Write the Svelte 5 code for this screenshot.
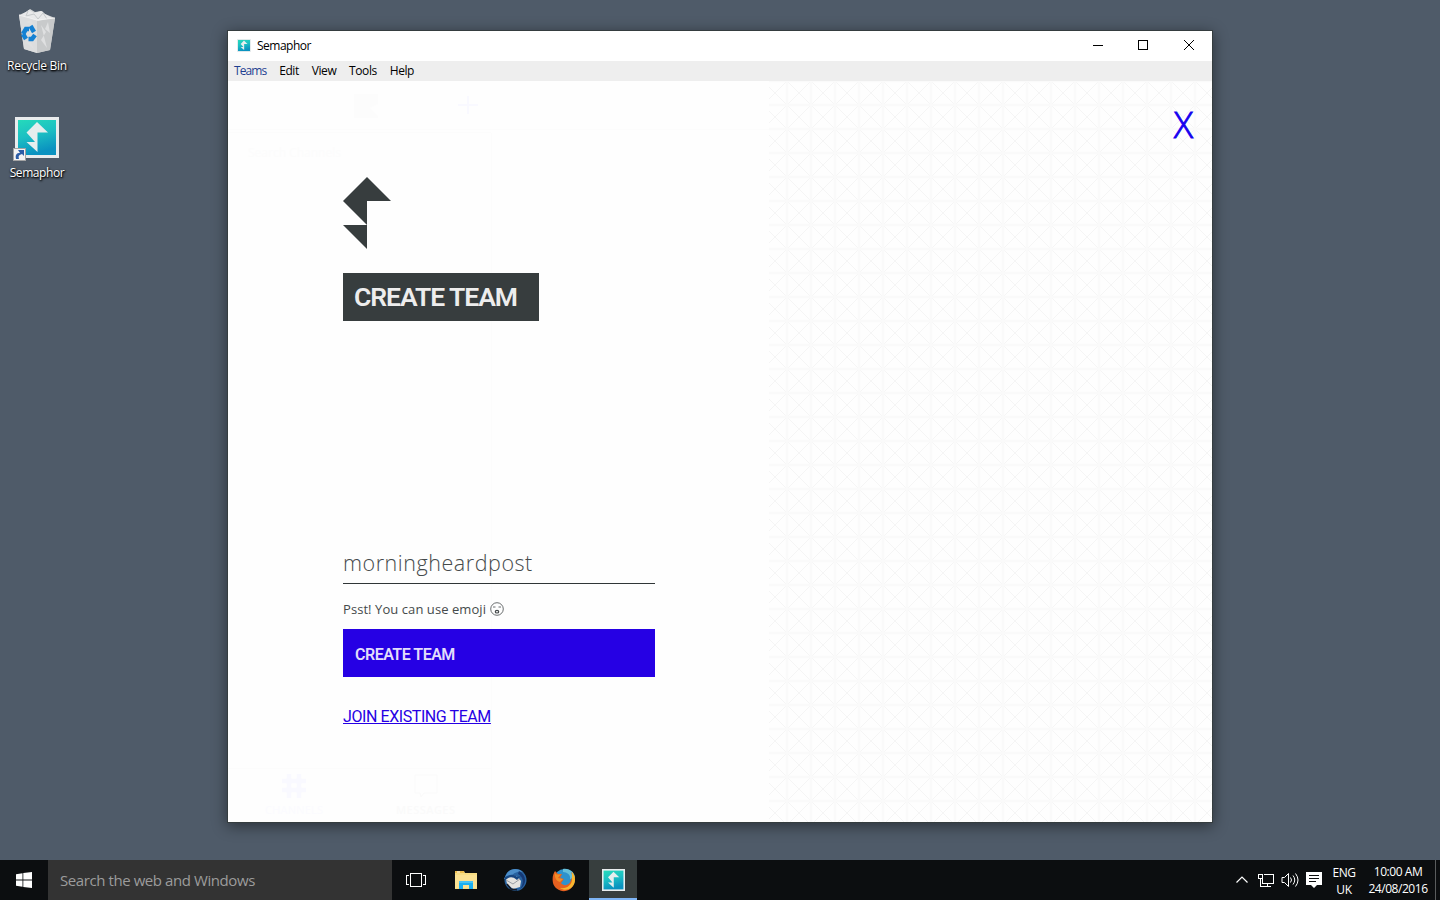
<script>
  const menus = ['Teams', 'Edit', 'View', 'Tools', 'Help'];
  let team = $state('morningheardpost');
</script>

{#snippet tile()}
  <defs>
    <linearGradient id="teal" x1="0" y1="0" x2=".3" y2="1">
      <stop offset="0" stop-color="#25dabb" />
      <stop offset=".5" stop-color="#1cbfc3" />
      <stop offset="1" stop-color="#0a92c0" />
    </linearGradient>
  </defs>
  <rect width="44" height="41" fill="#e9eced" />
  <rect x="3" y="3" width="38" height="35" fill="url(#teal)" />
  <path d="M22 5 L33 15.5 H22.5 V35 L11.5 25 H20 L11.5 15.5 Z" fill="#e6eeee" />
{/snippet}

<div class="screen">
  <main class="desktop">
    <div class="shortcuts">
      <div class="shortcut">
        <svg width="40" height="46" viewBox="0 0 40 46">
          <path d="M2 6 L9 3 L13 0 L18 3 L25 2 L28 5 L38 9 L33 41 L20 44 L7 40 Z" fill="#d5d7d8" />
          <path d="M2 6 L20 11 V44 L7 40 Z" fill="#dcddde" />
          <path d="M20 11 L38 9 L33 41 L20 44 Z" fill="#c8cacb" />
          <path d="M4 6 L12 1 L17 4 L24 2 L28 5 L35 9 L21 12 Z" fill="#e8e9ea" />
          <path d="M11 2l-2 5 8-2 4 5 5-6 4 6" stroke="#c6c9cb" fill="none" />
          <path d="M24 16l5 7-5 8 6 8zM31 13l-3 7 5 4zM9 13l5-2 3 5zM8 33l5-1 4 8z" fill="#dfe0e1" />
          <path d="M2 6 L20 11 L38 9" stroke="#f1f1f1" fill="none" />
          <g fill="none" stroke="#1481d3" stroke-width="4.500">
            <path d="M6 25 L9 20 L12 20" /><path d="M13.500 17 L17 23" /><path d="M18 26 L15 30 L11.500 30" /><path d="M9 30 L6 25" />
          </g>
        </svg>
        <span class="bin">Recycle Bin</span>
      </div>
      <div class="shortcut second">
        <svg width="48" height="46" viewBox="0 0 48 46">
          <g transform="translate(3 0)">{@render tile()}</g>
          <rect x="1.500" y="31.500" width="12" height="12" fill="#f3f3f3" stroke="#a4a4a4" />
          <path d="M4 42 C3 37 5 36 8 36 L6 33 H12 V39 L10 37 C7 38 6 39 7 42 Z" fill="#2c5ca5" />
        </svg>
        <span class="sem">Semaphor</span>
      </div>
    </div>

    <section class="window">
      <header class="title">
        <svg width="14" height="13" viewBox="0 0 44 41">{@render tile()}</svg>
        <span>Semaphor</span>
        <svg class="controls" width="104" height="14" viewBox="0 0 104 14" fill="none" stroke="#000" shape-rendering="crispEdges">
          <path d="M1 7.5H11M46.5 2.5h9v9h-9z" /><path d="M92 2l10 10M102 2L92 12" shape-rendering="auto" />
        </svg>
      </header>
      <nav>
        {#each menus as menu, i}<span class:active={i === 0}>{menu}</span>{/each}
      </nav>
      <div class="content">
        <svg class="ghost" width="541" height="741" viewBox="0 0 541 741" fill="none">
          <path d="M0 48.5H541M0 51.5H263M263.5 52V741M0 687.5H263" stroke="#fcfcfc" />
          <path d="M126 13h24v10l-8 4 8 8v2h-24z" fill="#fcfcfc" />
          <path d="M230 24h20M240 15v18" stroke="#f9f9ff" stroke-width="2" />
          <path d="M61 693v24M71 693v24M54 700h24M54 709h24" stroke="#f9f9ff" stroke-width="4.500" />
          <path d="M187 694h22v18h-13l-3 4-1-4h-5z" stroke="#fafafa" />
          <text x="20" y="76" fill="#fcfcfc" font-size="12">Search Channels</text>
          <text x="37" y="733" fill="#fbfbff" font-size="11" textLength="58">CHANNELS</text>
          <text x="168" y="733" fill="#fafafa" font-size="11" font-weight="600" textLength="59">MESSAGES</text>
        </svg>
        <div class="form">
          <svg class="logo" width="48" height="72" viewBox="0 0 48 72">
            <path d="M24 0 L48 24 H24 V48 L0 24 Z M0 48 H24 V72 Z" fill="#373d3e" />
          </svg>
          <h1><span>CREATE TEAM</span></h1>
          <input bind:value={team} spellcheck="false" aria-label="Team name" />
          <p>
            <span>Psst! You can use emoji</span>
            <svg width="14" height="14" viewBox="0 0 14 14" fill="none" stroke="#454a4b" stroke-width=".8">
              <circle cx="7" cy="7" r="6.3" /><path d="M3 5h2.5M8.5 5H11" /><ellipse cx="7" cy="9.7" rx="1.7" ry="1.3" stroke-width="1.2" />
            </svg>
          </p>
          <button><span>CREATE TEAM</span></button>
          <a href="#join">JOIN EXISTING TEAM</a>
        </div>
        <div class="side">
          <svg class="pattern" width="443" height="741">
            <defs>
              <pattern id="cross" width="24" height="24" patternUnits="userSpaceOnUse" x="18" y="0">
                <path d="M0 0L24 24M24 0L0 24" stroke="#f3f3f3" stroke-width=".8" />
                <path d="M0 0H24M0 24H24M0 0V24M24 0V24" stroke="#fafafa" stroke-width="2.400" />
              </pattern>
            </defs>
            <rect width="443" height="741" fill="url(#cross)" />
          </svg>
          <span class="close">X</span>
        </div>
      </div>
    </section>
  </main>

  <footer>
    <div class="start">
      <svg width="16" height="16" viewBox="0 0 16 16" fill="#fff"><path d="M0 2.2L6.5 1.3V7.5H0zM7.3 1.1L16 0V7.5H7.3zM0 8.5H6.5V14.7L0 13.8zM7.3 8.5H16V16L7.3 14.9z" /></svg>
    </div>
    <div class="search"><span>Search the web and Windows</span></div>
    <div class="app task">
      <svg width="20" height="14" viewBox="0 0 20 14" fill="none" stroke="#fff" shape-rendering="crispEdges"><path d="M4.5.5h11v13h-11zM3 2.5H.5v9H3M17 2.5h2.500v9H17" /></svg>
    </div>
    <div class="app explorer">
      <svg width="22" height="19" viewBox="0 0 22 19">
        <path d="M0 0h9l1 2h12v16H0z" fill="#f7dc83" /><path d="M0 0h9v2H0z" fill="#edbd4e" /><path d="M2 1h3" stroke="#fff" />
        <path d="M0 4h22v13H0z" fill="#fbe192" /><path d="M4 10h14v8h-4v-4H8v4H4z" fill="#1baff0" /><path d="M4 10h14v2H4z" fill="#46c4f5" />
      </svg>
    </div>
    <div class="app bird">
      <svg width="24" height="24" viewBox="0 0 24 24">
        <circle cx="12.500" cy="12" r="11" fill="#2862a0" /><path d="M4 5C8 0 15 0 20 4c-7-1-9 1-14 6l-5 1z" fill="#4b8dc8" />
        <path d="M16 3c8 4 8 14 1 18 4-5 4-12-2-15z" fill="#153976" />
        <path d="M3 11c4-5 10-5 15 2l-1 6-7 2-6-5z" fill="#e5e3df" /><path d="M3 12l7 4 7-5" stroke="#999da3" fill="none" /><path d="M2 9c5-3 9-3 12 0l4-1-4 4C9 8 6 9 2 12z" fill="#174681" /><path d="M4 16l4 5 6 1" stroke="#171c28" stroke-width="1.500" fill="none" />
      </svg>
    </div>
    <div class="app fox">
      <svg width="24" height="24" viewBox="0 0 24 24">
        <circle cx="12.500" cy="11.500" r="10.500" fill="#2f92cd" /><path d="M11 1c7-1 12 4 12 9l-5 1c1-4-3-7-7-7z" fill="#65bed9" />
        <path d="M3 3l3 3h4l-2 4 4 1-3 4c3 4 9 2 10-3 2-3 1-6 0-8 4 3 5 9 2 14-6 9-18 5-20-3C0 10 1 6 3 3z" fill="#e6601f" />
        <path d="M20 4c4 4 4 11 0 15-3 3-8 4-12 1 7 1 12-3 12-9z" fill="#f9b62d" /><path d="M3 4c0 3 3 3 6 2l-3 4 5 1-3 3c-4-1-6-5-5-10z" fill="#f28d27" />
      </svg>
    </div>
    <div class="app current"><svg width="23" height="22" viewBox="0 0 44 41" preserveAspectRatio="none">{@render tile()}</svg></div>
    <div class="tray">
      <svg width="70" height="20" viewBox="0 0 70 20" fill="none" stroke="#fff">
        <path d="M.5 12.500L6 7l5.500 5.500" stroke-width="1.200" />
        <path d="M28 4.500h9.500v9H26.500V9M28 16.500h7M31.500 14v3M22.500 4.500h4v4h-4zM24.500 9v7.500h3" shape-rendering="crispEdges" />
        <path d="M46 7.500h2.500l4-4v13l-4-4H46zM54.500 7.500q2 2.500 0 5M57 5.500q3.500 4.500 0 9M59.500 3.500q5 6.500 0 13" />
      </svg>
    </div>
    <svg class="note" width="16" height="16" viewBox="0 0 16 16"><path d="M0 0h16v13h-5l-3 3-3-3H0z" fill="#fff" /><path d="M3 3.500h10M3 6.500h10M3 9.500h7" stroke="#0c0e10" /></svg>
    <div class="stack lang"><span>ENG</span><span>UK</span></div>
    <div class="stack clock"><span class="time">10:00 AM</span><span class="date">24/08/2016</span></div>
    <div class="peek"></div>
  </footer>
</div>

<style>
  :global(body) { margin: 0; overflow: hidden; }
  .screen { width: 1440px; height: 900px; display: flex; flex-direction: column; font-family: "Open Sans", sans-serif; font-size: 12px; color: #000; }
  .screen :global(svg) { display: block; flex: none; }
  span { white-space: nowrap; }
  .desktop { height: 860px; position: relative; background: #4f5b69; }
  .shortcuts { width: 74px; padding-top: 9px; display: flex; flex-direction: column; }
  .shortcut { height: 107px; display: flex; flex-direction: column; align-items: center; color: #fff; text-shadow: 1px 1px 2px #000, 0 1px 2px #000; }
  .shortcut span { line-height: 16px; margin-top: 3px; }
  .second svg { margin: 1px 2px 0 0; }
  .second span { margin-top: 2px; }
  .bin { letter-spacing: -.25px; }
  .sem { letter-spacing: -.4px; }
  .window { position: absolute; left: 228px; top: 31px; width: 984px; height: 791px; background: #fefefe; box-shadow: 0 0 0 1px #353d3f, 0 3px 14px 1px #0007; display: flex; flex-direction: column; }
  .title { height: 30px; display: flex; align-items: center; padding: 0 16px 2px 9px; background: #fff; box-sizing: border-box; letter-spacing: -.5px; }
  .title span { margin-left: 6px; }
  .controls { margin-left: auto; }
  nav { height: 20px; background: #eee; padding-left: 6px; display: flex; gap: 12.8px; line-height: 20px; letter-spacing: -.4px; }
  .active { color: #1e3f91; letter-spacing: -.9px; }
  .content { height: 741px; display: flex; position: relative; }
  .ghost { position: absolute; left: 0; top: 0; }
  .form { width: 427px; padding: 96px 0 0 115px; box-sizing: border-box; position: relative; margin-right: 114px; display: flex; flex-direction: column; align-items: flex-start; color: #373d3e; }
  h1 { margin: 24px 0 0; width: 196px; height: 48px; box-sizing: border-box; padding-left: 11px; background: #373d3e; color: #ededed; font: 600 26.500px/48px "Roboto", sans-serif; letter-spacing: -1.05px; }
  input { margin: 220px 0 0; width: 312px; height: 43px; box-sizing: border-box; border: 0; border-bottom: 1px solid #303637; padding: 1px 0 0; outline: 0; background: none; color: #454a4b; font: 300 21.500px "Open Sans", sans-serif; letter-spacing: .55px; }
  p { margin: 15px 0 0; height: 20px; display: flex; align-items: center; gap: 4px; font-size: 13px; color: #454a4b; letter-spacing: .07px; }
  button { margin-top: 10px; width: 312px; height: 48px; border: 0; padding: 2px 0 0 12px; text-align: left; background: #2600e4; color: #e2ddfb; font: 600 16px "Roboto", sans-serif; letter-spacing: -.5px; }
  .form a { margin-top: 30px; color: #2600e4; font: 400 16px/20px "Roboto", sans-serif; letter-spacing: -.42px; text-underline-offset: 1px; text-decoration-thickness: 1px; white-space: nowrap; }
  .side { width: 443px; position: relative; }
  .close { position: absolute; right: 19px; top: 18px; color: #1500ef; font: 300 36px/52px "Open Sans", sans-serif; -webkit-text-stroke: .9px #1500ef; }
  footer { height: 40px; display: flex; align-items: stretch; background: #0c0e10; color: #fff; }
  .start { width: 48px; display: flex; align-items: center; justify-content: center; }
  .search { width: 344px; background: #333; color: #9c9c9c; font-size: 15px; line-height: 41px; padding-left: 12px; box-sizing: border-box; letter-spacing: -.42px; }
  .app { width: 49px; display: flex; align-items: center; justify-content: center; box-sizing: border-box; }
  .task { padding-right: 1px; }
  .current { width: 48px; background: #373e3e; border-bottom: 2px solid #7eb4f5; padding: 1px 0 0; margin-left: 1px; }
  .tray { display: flex; align-items: center; margin-left: auto; width: 70px; }
  .note { align-self: center; }
  .stack { display: flex; flex-direction: column; align-items: center; line-height: 18px; padding-top: 2px; box-sizing: border-box; }
  .lang { width: 24px; line-height: 17px; padding-top: 4px; margin-left: 10px; letter-spacing: -.4px; }
  .clock { width: 60px; margin: 0 7px 0 12px; line-height: 17px; padding-top: 3px; letter-spacing: -.45px; }
  .peek { width: 4px; border-left: 1px solid #5a5c5d; }
</style>
